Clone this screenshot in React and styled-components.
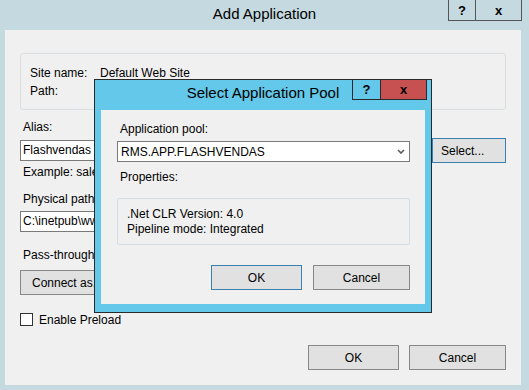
import React from 'react'
import styled, { createGlobalStyle } from 'styled-components'

const Global = createGlobalStyle`
  body {
    margin: 0;
    font-family: "Liberation Sans", Arial, sans-serif;
    font-size: 12px;
    color: #000;
  }
`

const Window = styled.div`
  position: relative;
  width: 529px;
  height: 390px;
  background: #c5d9e0;
  display: flex;
  flex-direction: column;
  overflow: hidden;
`

const TitleBar = styled.div`
  display: grid;
  grid-template-columns: 1fr auto 1fr;
  height: ${p => p.$height}px;
  flex-shrink: 0;
`

const Title = styled.div`
  grid-column: 2;
  font-size: 15px;
  line-height: ${p => p.$line}px;
  white-space: nowrap;
`

const CaptionButtons = styled.div`
  grid-column: 3;
  justify-self: end;
  align-self: start;
  display: flex;
  margin-right: ${p => p.$right}px;
`

const CaptionButton = styled.div`
  box-sizing: border-box;
  width: ${p => p.$w}px;
  height: ${p => p.$h}px;
  border: 1px solid ${p => p.$border};
  border-top: none;
  margin-left: -1px;
  background: ${p => p.$bg || 'transparent'};
  display: flex;
  align-items: center;
  justify-content: center;
  font-weight: bold;
  font-size: 13px;
  line-height: 1;
`

const Client = styled.div`
  flex: 1;
  background: #f0f0f0;
  margin: 0 8px 5px 5px;
  padding: 23px 15px 15px;
  display: flex;
  flex-direction: column;
`

const GroupBox = styled.div`
  border: 1px solid #d9dee2;
  border-radius: 3px;
  padding: 10px 9px 9px;
`

const InfoRow = styled.div`
  display: grid;
  grid-template-columns: 70px 1fr;
  line-height: 18px;
`

const Label = styled.div`
  line-height: 15px;
  padding-left: 3px;
  margin-top: ${p => p.$top || 0}px;
  white-space: nowrap;
`

const FieldRow = styled.div`
  display: flex;
  align-items: center;
  gap: 8px;
  margin-top: ${p => p.$top || 0}px;
`

const TextBox = styled.div`
  box-sizing: border-box;
  height: 21px;
  width: ${p => (p.$w ? `${p.$w}px` : 'auto')};
  flex: ${p => (p.$w ? 'none' : 1)};
  margin-top: ${p => p.$top || 0}px;
  border: 1px solid #7a7a7a;
  background: #fff;
  padding: 0 2px;
  line-height: 19px;
  white-space: nowrap;
  overflow: hidden;
`

const ComboBox = styled.div`
  box-sizing: border-box;
  height: 21px;
  margin-top: 4px;
  border: 1px solid #7a7a7a;
  background: #fff;
  padding: 0 4px 0 3px;
  display: flex;
  align-items: center;
  justify-content: space-between;
`

const Button = styled.div`
  box-sizing: border-box;
  width: ${p => p.$w}px;
  height: 25px;
  flex: none;
  border: 1px solid ${p => (p.$default ? '#3c7fb1' : '#888')};
  background: #e1e1e1;
  display: flex;
  align-items: center;
  justify-content: ${p => (p.$left ? 'flex-start' : 'center')};
  padding-left: ${p => (p.$left ? p.$left : 0)}px;
  margin-top: ${p => p.$top || 0}px;
  white-space: nowrap;
`

const CheckRow = styled.div`
  display: flex;
  align-items: center;
  margin-top: 18px;
  height: 13px;
`

const CheckBox = styled.div`
  box-sizing: border-box;
  width: 13px;
  height: 13px;
  border: 1px solid #333;
  background: #fff;
  margin-right: 6px;
`

const ButtonRow = styled.div`
  display: flex;
  justify-content: flex-end;
  gap: ${p => p.$gap}px;
  margin-top: ${p => (p.$top ? `${p.$top}px` : 'auto')};
`

const Dialog = styled.div`
  position: absolute;
  left: 94px;
  top: 79px;
  width: 338px;
  height: 234px;
  box-sizing: border-box;
  border: 1px solid #2a2a2a;
  background: #63c8e9;
  display: flex;
  flex-direction: column;
`

const DialogClient = styled.div`
  flex: 1;
  background: #f0f0f0;
  margin: 0 6px 8px 6px;
  padding: 12px 15px 14px 16px;
  display: flex;
  flex-direction: column;
`

const PropsBox = styled.div`
  box-sizing: border-box;
  height: 47px;
  margin-top: 13px;
  border: 1px solid #d3dee6;
  border-radius: 2px;
  padding: 8px 9px 0;
  line-height: 15px;
`

const Chevron = () => (
  <svg width="8" height="5" viewBox="0 0 8 5">
    <path d="M1 1 L4 4 L7 1" fill="none" stroke="#5a5a5a" strokeWidth="1.6" />
  </svg>
)

export default function App() {
  return (
    <Window>
      <Global />
      <TitleBar $height={30}>
        <Title $line={27}>Add Application</Title>
        <CaptionButtons $right={7}>
          <CaptionButton $w={28} $h={21} $border="#555">?</CaptionButton>
          <CaptionButton $w={47} $h={21} $border="#555">x</CaptionButton>
        </CaptionButtons>
      </TitleBar>
      <Client>
        <GroupBox>
          <InfoRow>
            <span>Site name:</span>
            <span>Default Web Site</span>
          </InfoRow>
          <InfoRow>
            <span>Path:</span>
            <span></span>
          </InfoRow>
        </GroupBox>
        <Label $top={10}>Alias:</Label>
        <FieldRow $top={3}>
          <TextBox>Flashvendas</TextBox>
          <Button $w={74} $default $left={8}>Select...</Button>
        </FieldRow>
        <Label $top={2}>Example: sales</Label>
        <Label $top={12}>Physical path:</Label>
        <TextBox $w={380} $top={4}>C:\inetpub\wwwroot\Flashvendas</TextBox>
        <Label $top={16}>Pass-through authentication</Label>
        <Button $w={90} $left={11} $top={7}>Connect as...</Button>
        <CheckRow>
          <CheckBox />
          <span>Enable Preload</span>
        </CheckRow>
        <ButtonRow $gap={10}>
          <Button $w={91}>OK</Button>
          <Button $w={97}>Cancel</Button>
        </ButtonRow>
      </Client>

      <Dialog>
        <TitleBar $height={30}>
          <Title $line={25}>Select Application Pool</Title>
          <CaptionButtons $right={4}>
            <CaptionButton $w={29} $h={20} $border="#2a2a2a">?</CaptionButton>
            <CaptionButton $w={47} $h={20} $border="#2a2a2a" $bg="#c75050">x</CaptionButton>
          </CaptionButtons>
        </TitleBar>
        <DialogClient>
          <Label>Application pool:</Label>
          <ComboBox>
            <span>RMS.APP.FLASHVENDAS</span>
            <Chevron />
          </ComboBox>
          <Label $top={8}>Properties:</Label>
          <PropsBox>
            <div>.Net CLR Version: 4.0</div>
            <div>Pipeline mode: Integrated</div>
          </PropsBox>
          <ButtonRow $gap={11} $top={20}>
            <Button $w={91} $default>OK</Button>
            <Button $w={97}>Cancel</Button>
          </ButtonRow>
        </DialogClient>
      </Dialog>
    </Window>
  )
}
